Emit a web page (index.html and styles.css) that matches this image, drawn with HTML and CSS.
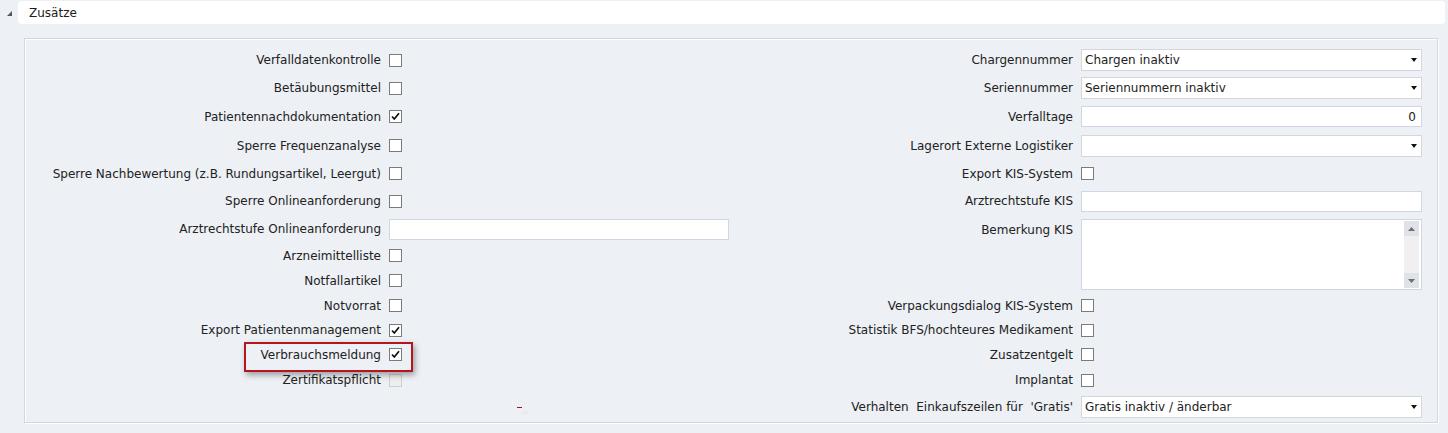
FILE: index.html
```html
<!DOCTYPE html>
<html lang="de">
<head>
<meta charset="utf-8">
<title>Zusätze</title>
<link rel="stylesheet" href="styles.css">
</head>
<body>
<div class="section-header">
  <span class="toggle"><svg width="5" height="5" viewBox="0 0 5 5"><polygon points="0,5 5,0 5,5" fill="#555"/></svg></span>
  <div class="header-box">Zusätze</div>
</div>

<div class="panel">
  <div class="form-grid">
    <!-- row 1 -->
    <div class="lbl">Verfalldatenkontrolle</div>
    <div class="ctl"><span class="cb"></span></div>
    <div class="lbl">Chargennummer</div>
    <div class="ctl"><div class="select">Chargen inaktiv<span class="arrow"></span></div></div>
    <!-- row 2 -->
    <div class="lbl">Betäubungsmittel</div>
    <div class="ctl"><span class="cb"></span></div>
    <div class="lbl">Seriennummer</div>
    <div class="ctl"><div class="select">Seriennummern inaktiv<span class="arrow"></span></div></div>
    <!-- row 3 -->
    <div class="lbl">Patientennachdokumentation</div>
    <div class="ctl"><span class="cb checked"><svg viewBox="0 0 13 13"><path d="M3 6.5 L5.3 9 L10 3.2" /></svg></span></div>
    <div class="lbl">Verfalltage</div>
    <div class="ctl"><input class="input num" type="text" value="0"></div>
    <!-- row 4 -->
    <div class="lbl">Sperre Frequenzanalyse</div>
    <div class="ctl"><span class="cb"></span></div>
    <div class="lbl">Lagerort Externe Logistiker</div>
    <div class="ctl"><div class="select"><span class="arrow"></span></div></div>
    <!-- row 5 -->
    <div class="lbl">Sperre Nachbewertung (z.B. Rundungsartikel, Leergut)</div>
    <div class="ctl"><span class="cb"></span></div>
    <div class="lbl">Export KIS-System</div>
    <div class="ctl"><span class="cb"></span></div>
    <!-- row 6 -->
    <div class="lbl">Sperre Onlineanforderung</div>
    <div class="ctl"><span class="cb"></span></div>
    <div class="lbl">Arztrechtstufe KIS</div>
    <div class="ctl"><input class="input" type="text"></div>
    <!-- row 7 -->
    <div class="lbl">Arztrechtstufe Onlineanforderung</div>
    <div class="ctl"><input class="input" type="text"></div>
    <div class="lbl lbl-top span3">Bemerkung KIS</div>
    <div class="ctl ctl-top span3">
      <div class="textarea-box">
        <textarea class="textarea"></textarea>
        <div class="scrollbar">
          <span class="sb-btn"><svg width="7" height="4" viewBox="0 0 7 4"><polygon points="0,4 3.5,0 7,4" fill="#6f6f6f"/></svg></span>
          <span class="sb-track"></span>
          <span class="sb-btn"><svg width="7" height="4" viewBox="0 0 7 4"><polygon points="0,0 7,0 3.5,4" fill="#6f6f6f"/></svg></span>
        </div>
      </div>
    </div>
    <!-- row 8 -->
    <div class="lbl">Arzneimittelliste</div>
    <div class="ctl"><span class="cb"></span></div>
    <!-- row 9 -->
    <div class="lbl">Notfallartikel</div>
    <div class="ctl"><span class="cb"></span></div>
    <!-- row 10 -->
    <div class="lbl">Notvorrat</div>
    <div class="ctl"><span class="cb"></span></div>
    <div class="lbl">Verpackungsdialog KIS-System</div>
    <div class="ctl"><span class="cb"></span></div>
    <!-- row 11 -->
    <div class="lbl">Export Patientenmanagement</div>
    <div class="ctl"><span class="cb checked"><svg viewBox="0 0 13 13"><path d="M3 6.5 L5.3 9 L10 3.2" /></svg></span></div>
    <div class="lbl">Statistik BFS/hochteures Medikament</div>
    <div class="ctl"><span class="cb"></span></div>
    <!-- row 12 -->
    <div class="lbl">Verbrauchsmeldung</div>
    <div class="ctl"><span class="cb checked"><svg viewBox="0 0 13 13"><path d="M3 6.5 L5.3 9 L10 3.2" /></svg></span></div>
    <div class="lbl">Zusatzentgelt</div>
    <div class="ctl"><span class="cb"></span></div>
    <!-- row 13 -->
    <div class="lbl">Zertifikatspflicht</div>
    <div class="ctl"><span class="cb disabled"></span></div>
    <div class="lbl">Implantat</div>
    <div class="ctl"><span class="cb"></span></div>
    <!-- row 14 -->
    <div class="lbl"></div>
    <div class="ctl"></div>
    <div class="lbl">Verhalten&nbsp; Einkaufszeilen für&nbsp; 'Gratis'</div>
    <div class="ctl"><div class="select">Gratis inaktiv / änderbar<span class="arrow"></span></div></div>
  </div>

  <div class="highlight"></div>
  <div class="marker"></div>
</div>
</body>
</html>
```

FILE: styles.css
```css
html, body {
  margin: 0;
  padding: 0;
}

body {
  background: #edf0f5;
  font-family: "DejaVu Sans", Verdana, sans-serif;
  font-size: 12px;
  color: #222;
  height: 433px;
  overflow: hidden;
}

.section-header {
  display: flex;
  align-items: center;
  padding: 1px 3px 0 7px;
}

.toggle {
  width: 11px;
  display: flex;
  align-items: center;
  padding-top: 2px;
}

.header-box {
  flex: 1;
  height: 23px;
  line-height: 24px;
  background: #fff;
  border-radius: 4px;
  padding-left: 11px;
  font-size: 12px;
  color: #1c1c1c;
}

.panel {
  position: relative;
  margin: 14px 10px 0 24px;
  height: 385px;
  border: 1px solid #d3d7dd;
  box-shadow: inset 1px 1px 0 #fff, 1px 1px 0 #fff;
  padding: 7px 15px 0 0;
  box-sizing: border-box;
}

.form-grid {
  display: grid;
  grid-template-columns: 356px 340px 336px 341px;
  column-gap: 8px;
  grid-template-rows: 28px 28px 29px 29px 27px 28px 28px 25px 25px 25px 24px 25px 26px 27px;
  align-items: center;
}

.lbl {
  text-align: right;
  white-space: nowrap;
  line-height: 14px;
}

.ctl {
  display: flex;
  align-items: center;
}

.span3 {
  grid-row: span 3;
}

.lbl-top {
  align-self: start;
  padding-top: 8px;
}

.ctl-top {
  align-self: start;
  padding-top: 4px;
}

.cb {
  width: 11px;
  height: 11px;
  border: 1px solid #7b7b7b;
  background: #fff;
  display: inline-block;
  position: relative;
}

.cb svg {
  position: absolute;
  left: -1px;
  top: -1px;
  width: 13px;
  height: 13px;
}

.cb svg path {
  fill: none;
  stroke: #111;
  stroke-width: 1.7;
}

.cb.disabled {
  border-color: #cfcfcf;
  background: #eeeeee;
}

.select {
  position: relative;
  width: 100%;
  height: 22px;
  box-sizing: border-box;
  border: 1px solid #d3d6da;
  background: #fff;
  padding: 0 20px 0 3px;
  line-height: 20px;
  white-space: nowrap;
}

.arrow {
  position: absolute;
  right: 4px;
  top: 8px;
  width: 0;
  height: 0;
  border-left: 3.5px solid transparent;
  border-right: 3.5px solid transparent;
  border-top: 4px solid #111;
}

.input {
  width: 100%;
  height: 21px;
  box-sizing: border-box;
  border: 1px solid #d1d7e2;
  background: #fff;
  font: inherit;
  color: inherit;
  padding: 0 5px;
  margin: 0;
  outline: none;
}

.input.num {
  text-align: right;
}

.textarea-box {
  width: 100%;
  height: 71px;
  box-sizing: border-box;
  border: 1px solid #d1d7e2;
  background: #fff;
  display: flex;
  padding: 1px 2px 1px 0;
}

.textarea {
  flex: 1;
  border: 0;
  resize: none;
  outline: none;
  font: inherit;
  padding: 2px 4px;
  background: transparent;
}

.scrollbar {
  width: 15px;
  display: flex;
  flex-direction: column;
  background: #f0f0f0;
}

.sb-btn {
  height: 15px;
  background: #dfe2e6;
  display: flex;
  align-items: center;
  justify-content: center;
}

.sb-track {
  flex: 1;
}

.highlight {
  position: absolute;
  left: 219px;
  top: 303px;
  width: 165px;
  height: 26px;
  border: 2px solid #b3161c;
  box-shadow: 2px 3px 6px rgba(0, 0, 0, 0.35);
}

.marker {
  position: absolute;
  left: 492px;
  top: 368px;
  width: 5px;
  height: 1px;
  background: #a3120f;
  box-shadow: 6px 5px 3px rgba(0, 0, 0, 0.12);
}
```
